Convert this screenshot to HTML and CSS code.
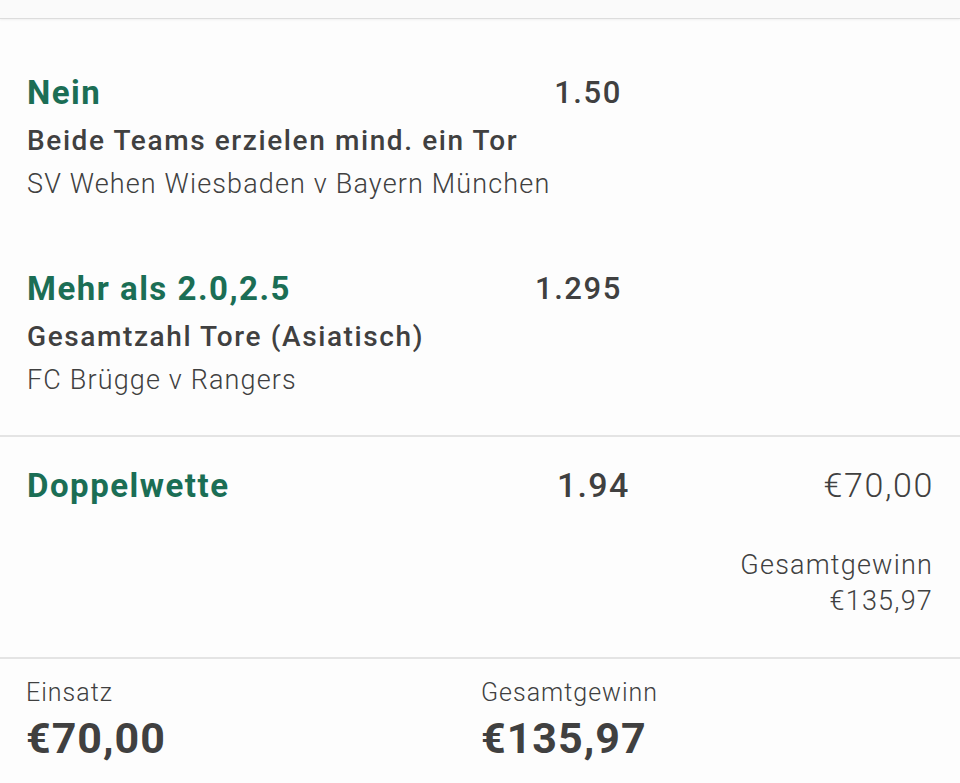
FILE: index.html
```html
<!doctype html>
<html lang="de">
<head>
    <meta charset="utf-8">
    <meta name="viewport" content="width=device-width, initial-scale=1">
    <title>Wettschein</title>
    <link rel="stylesheet" href="styles.css">
</head>
<body>
    <div class="topbar"></div>

    <div class="selections">
        <div class="selection">
            <div class="sel-head">
                <span class="pick">Nein</span>
                <span class="odds">1.50</span>
            </div>
            <div class="market">Beide Teams erzielen mind. ein Tor</div>
            <div class="event">SV Wehen Wiesbaden v Bayern München</div>
        </div>
        <div class="selection">
            <div class="sel-head">
                <span class="pick">Mehr als 2.0,2.5</span>
                <span class="odds">1.295</span>
            </div>
            <div class="market">Gesamtzahl Tore (Asiatisch)</div>
            <div class="event">FC Brügge v Rangers</div>
        </div>
    </div>

    <div class="combo">
        <div class="combo-head">
            <span class="pick">Doppelwette</span>
            <span class="combo-odds">1.94</span>
            <span class="combo-stake">€70,00</span>
        </div>
        <div class="combo-return">
            <div>Gesamtgewinn</div>
            <div>€135,97</div>
        </div>
    </div>

    <div class="summary">
        <div class="sum-col">
            <div class="sum-label">Einsatz</div>
            <div class="sum-value">€70,00</div>
        </div>
        <div class="sum-col">
            <div class="sum-label">Gesamtgewinn</div>
            <div class="sum-value">€135,97</div>
        </div>
    </div>
</body>
</html>
```

FILE: styles.css
```css
body {
    font-family: Roboto, "Noto Sans", sans-serif;
    margin: 0;
    padding: 0;
    background: #fdfdfd;
    color: #404040;
}
.topbar {
    height: 18px;
    background: #fafafa;
    border-bottom: 1px solid #dcdcdc;
    box-shadow: 0 1px 2px rgba(0, 0, 0, 0.06);
}
.selections {
    padding: 46px 0 34px 27px;
}
.selection + .selection {
    margin-top: 56px;
}
.sel-head {
    display: flex;
    justify-content: space-between;
    align-items: center;
    width: 595px;
    height: 54px;
}
.pick {
    color: #1b6e55;
    font-weight: 700;
    font-size: 33px;
    letter-spacing: 1.5px;
}
.odds {
    font-weight: 500;
    font-size: 31px;
    letter-spacing: 1.6px;
}
.market {
    font-weight: 500;
    font-size: 28px;
    letter-spacing: 1.6px;
    line-height: 44px;
}
.event {
    font-weight: 300;
    font-size: 27px;
    letter-spacing: 1.15px;
    line-height: 42px;
}
.combo {
    border-top: 2px solid #e4e4e4;
    padding: 23px 28px 38px 27px;
}
.combo-head {
    display: grid;
    grid-template-columns: 530px 80px 1fr;
    align-items: center;
    height: 50px;
}
.combo-odds {
    font-weight: 500;
    font-size: 34px;
    letter-spacing: 1.3px;
}
.combo-stake {
    text-align: right;
    font-weight: 300;
    font-size: 34px;
    letter-spacing: 1.6px;
    margin-right: -2px;
}
.combo-return {
    margin-top: 37px;
    text-align: right;
    font-weight: 300;
    font-size: 27px;
    letter-spacing: 1.2px;
    line-height: 36px;
    margin-right: -1px;
}
.summary {
    border-top: 2px solid #e4e4e4;
    padding: 17px 0 0 26px;
    display: flex;
}
.sum-col {
    width: 455px;
}
.sum-label {
    font-weight: 300;
    font-size: 25px;
    letter-spacing: 1px;
    line-height: 34px;
}
.sum-value {
    font-weight: 700;
    font-size: 43px;
    letter-spacing: 1px;
    line-height: 56px;
}
```
